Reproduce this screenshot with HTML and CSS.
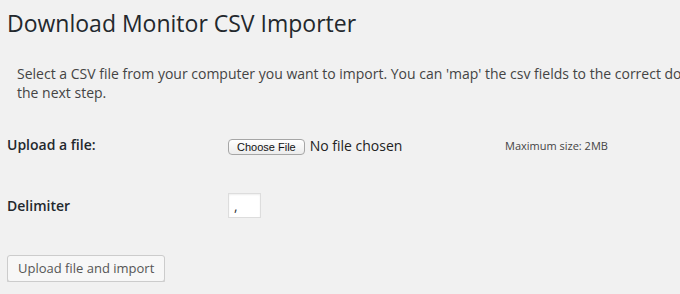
FILE: index.html
```html
<!DOCTYPE html>
<html>

<head>
  <link rel="stylesheet" href="styles.css">
</head>

<body>
  <div class="wrap">
    <h2 class="page-title">Download Monitor CSV Importer</h2>

    <div class="inside">
      <p>Select a CSV file from your computer you want to import. You can 'map' the csv fields to the correct download fields in the next step.</p>
    </div>

    <form class="import-form">
      <table class="form-table">
        <tr>
          <th><label for="upload">Upload a file:</label></th>
          <td class="file-cell">
            <input type="file" id="upload" name="import">
            <small class="max-size">Maximum size: 2MB</small>
          </td>
        </tr>
        <tr>
          <th><label for="delimiter">Delimiter</label></th>
          <td><input type="text" id="delimiter" class="small-text" value=","></td>
        </tr>
      </table>

      <p class="submit">
        <button type="button" class="button">Upload file and import</button>
      </p>
    </form>
  </div>
</body>

</html>
```

FILE: styles.css
```css
body {
  margin: 0;
  overflow: hidden;
  background-color: #f1f1f1;
  color: #444;
  font-family: "Open Sans", sans-serif;
  font-size: 13px;
  line-height: 1.4em;
}

.wrap {
  width: 800px;
  padding: 0 0 0 7px;
}

.page-title {
  margin: 0;
  padding: 9px 0 4px;
  font-size: 23px;
  font-weight: 400;
  line-height: 29px;
  color: #23282d;
}

.inside {
  padding: 0 10px;
}

.inside p {
  margin: 22px 0 0;
  font-size: 14px;
  line-height: 19px;
}

.form-table {
  border-collapse: collapse;
  margin-top: 14px;
}

.form-table th {
  width: 211px;
  padding: 19px 10px 19px 0;
  text-align: left;
  vertical-align: middle;
  font-size: 14px;
  font-weight: 600;
  color: #23282d;
}

.form-table td {
  padding: 19px 0;
  vertical-align: middle;
}

.file-cell {
  display: flex;
  align-items: center;
}

input[type="file"] {
  width: 277px;
  font-family: "Open Sans", sans-serif;
  font-size: 14px;
  color: #222;
}

input[type="file"]::file-selector-button {
  margin-right: 5px;
  padding: 1px 8px;
  border: 1px solid #a6a6a6;
  border-radius: 4px;
  background: linear-gradient(#fff, #ececec);
  font-family: "Liberation Sans", sans-serif;
  font-size: 11px;
  color: #111;
}

.max-size {
  margin-top: 2px;
  font-size: 11px;
  color: #444;
}

.small-text {
  width: 33px;
  height: 25px;
  box-sizing: border-box;
  margin: 0;
  padding: 2px 5px;
  border: 1px solid #ddd;
  background: #fff;
  box-shadow: inset 0 1px 2px rgba(0, 0, 0, 0.07);
  font-family: "Open Sans", sans-serif;
  font-size: 14px;
  color: #333;
}

.submit {
  margin: 18px 0 0;
}

.button {
  height: 27px;
  padding: 0 10px 1px;
  border: 1px solid #ccc;
  border-radius: 3px;
  background: #f7f7f7;
  box-shadow: 0 1px 0 #ccc;
  font-family: "Open Sans", sans-serif;
  font-size: 13px;
  color: #555;
}
```
